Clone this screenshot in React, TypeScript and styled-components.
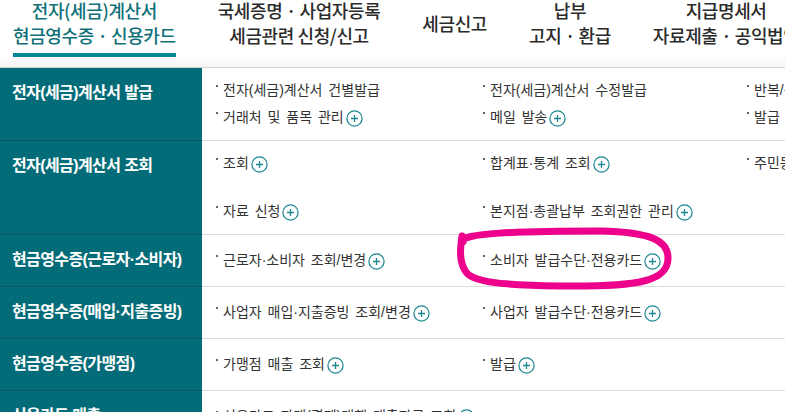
import styled, { createGlobalStyle } from 'styled-components';

const GlobalStyle = createGlobalStyle`
  html, body {
    margin: 0;
    padding: 0;
    background: #fff;
    overflow: hidden;
  }

  body {
    font-family: 'Liberation Sans', 'Noto Sans CJK KR', sans-serif;
    color: #333;
  }
`;

const COLOR = {
  teal: '#046c78',
  tealLine: '#0a5963',
  point: '#00868f',
  icon: '#1b8790',
  border: '#dcdcdc',
};

type Entry = { text: string; plus?: boolean; tall?: boolean } | null;

type Row = {
  title: string;
  items: Entry[];
};

const ROWS: Row[] = [
  {
    title: '전자(세금)계산서 발급',
    items: [
      { text: '전자(세금)계산서 건별발급' },
      { text: '전자(세금)계산서 수정발급' },
      { text: '반복/복수 발급' },
      { text: '거래처 및 품목 관리', plus: true },
      { text: '메일 발송', plus: true },
      { text: '발급 보류/예정 목록', plus: true },
    ],
  },
  {
    title: '전자(세금)계산서 조회',
    items: [
      { text: '조회', plus: true },
      { text: '합계표·통계 조회', plus: true },
      { text: '주민등록번호 수취분 전환 및 조회', tall: true },
      { text: '자료 신청', plus: true },
      { text: '본지점·총괄납부 조회권한 관리', plus: true },
      null,
    ],
  },
  {
    title: '현금영수증(근로자·소비자)',
    items: [
      { text: '근로자·소비자 조회/변경', plus: true },
      { text: '소비자 발급수단·전용카드', plus: true },
    ],
  },
  {
    title: '현금영수증(매입·지출증빙)',
    items: [
      { text: '사업자 매입·지출증빙 조회/변경', plus: true },
      { text: '사업자 발급수단·전용카드', plus: true },
    ],
  },
  {
    title: '현금영수증(가맹점)',
    items: [
      { text: '가맹점 매출 조회', plus: true },
      { text: '발급', plus: true },
    ],
  },
  {
    title: '신용카드 매출',
    items: [{ text: '신용카드 판매(결제)대행 매출자료 조회', plus: true }],
  },
];

const TABS = [
  ['전자(세금)계산서', '현금영수증 · 신용카드'],
  ['국세증명 · 사업자등록', '세금관련 신청/신고'],
  ['세금신고'],
  ['납부', '고지 · 환급'],
  ['지급명세서', '자료제출 · 공익법인'],
];

const Page = styled.div`
  position: relative;
  width: 1100px;
`;

const TabBar = styled.div`
  display: flex;
  gap: 42px;
  height: 67px;
  padding-left: 13px;
  border-bottom: 1px solid #d6d6d6;
  background: linear-gradient(#fff 82%, #f4f4f4);
  overflow: hidden;
`;

const Tab = styled.div<{ $active?: boolean }>`
  display: flex;
  flex-direction: column;
  margin-top: -1px;
  color: ${({ $active }) => ($active ? '#0f7078' : '#2b2b2b')};

  .label {
    height: 48px;
    display: flex;
    flex-direction: column;
    justify-content: center;
    align-items: center;
    font-family: 'Noto Sans CJK KR', sans-serif;
    font-size: 18px;
    font-weight: 500;
    line-height: 25px;
    letter-spacing: -0.4px;
    white-space: nowrap;
  }

  .bar {
    margin-top: 6px;
    height: 4px;
    background-color: ${({ $active }) => ($active ? COLOR.point : 'transparent')};
  }
`;

const Table = styled.div`
  display: flex;
  flex-direction: column;
`;

const TableRow = styled.div`
  display: flex;
  min-height: 51px;
  border-bottom: 1px solid ${COLOR.border};
`;

const Heading = styled.div`
  flex: 0 0 202px;
  box-sizing: border-box;
  padding: 13px 12px 14px;
  background-color: ${COLOR.teal};
  border-bottom: 1px solid ${COLOR.tealLine};
  margin-bottom: -1px;
  color: #fff;
  font-size: 16px;
  font-weight: 700;
  line-height: 24px;
  letter-spacing: -0.6px;
  white-space: nowrap;
`;

const Cells = styled.div`
  flex: 1;
  display: flex;
  align-items: center;
  padding: 12px 0 12px 14px;
`;

const ItemGrid = styled.ul`
  display: grid;
  grid-template-columns: 267px 264px 1fr;
  row-gap: 6px;
  margin: 0;
  padding: 0;
  list-style: none;
`;

const Item = styled.li<{ $tall?: boolean }>`
  display: flex;
  align-items: flex-start;
  min-height: ${({ $tall }) => ($tall ? '42px' : '0')};
  font-size: 14px;
  line-height: 21px;
  letter-spacing: 0;
  word-spacing: 2px;
  color: #333;
  white-space: nowrap;

  &::before {
    content: '';
    flex: 0 0 2px;
    height: 2px;
    margin: 5px 5px 0 0;
    background-color: #666;
  }

  svg {
    margin: 3px 0 0 2px;
    flex: 0 0 17px;
  }
`;

const Annotation = styled.svg`
  position: absolute;
  left: 0;
  top: 0;
  pointer-events: none;
`;

const PlusIcon = () => (
  <svg width='17' height='17' viewBox='0 0 17 17'>
    <circle cx='8.5' cy='8.5' r='7.6' fill='none' stroke={COLOR.icon} strokeWidth='1.2' />
    <path d='M8.5 5v7M5 8.5h7' stroke={COLOR.icon} strokeWidth='1.3' />
  </svg>
);

const App = () => {
  return (
    <>
      <GlobalStyle />
      <Page>
        <TabBar>
          {TABS.map((lines, i) => (
            <Tab key={i} $active={i === 0}>
              <div className='label'>
                {lines.map((line) => (
                  <span key={line}>{line}</span>
                ))}
              </div>
              <div className='bar' />
            </Tab>
          ))}
        </TabBar>
        <Table>
          {ROWS.map((row) => (
            <TableRow key={row.title}>
              <Heading>{row.title}</Heading>
              <Cells>
                <ItemGrid>
                  {row.items.map((item, i) =>
                    item ? (
                      <Item key={i} $tall={item.tall}>
                        <span>{item.text}</span>
                        {item.plus && <PlusIcon />}
                      </Item>
                    ) : (
                      <li key={i} />
                    ),
                  )}
                </ItemGrid>
              </Cells>
            </TableRow>
          ))}
        </Table>
        <Annotation width='785' height='412'>
          <path
            d='M463 242 C458 233, 520 231, 600 231 C652 232, 668 241, 668 258 C668 281, 640 287, 560 286 C500 285, 473 282, 466 272 C459 262, 460 250, 462 236'
            fill='none'
            stroke='#ec008c'
            strokeWidth='7'
            strokeLinecap='round'
            strokeLinejoin='round'
          />
        </Annotation>
      </Page>
    </>
  );
};

export default App;
